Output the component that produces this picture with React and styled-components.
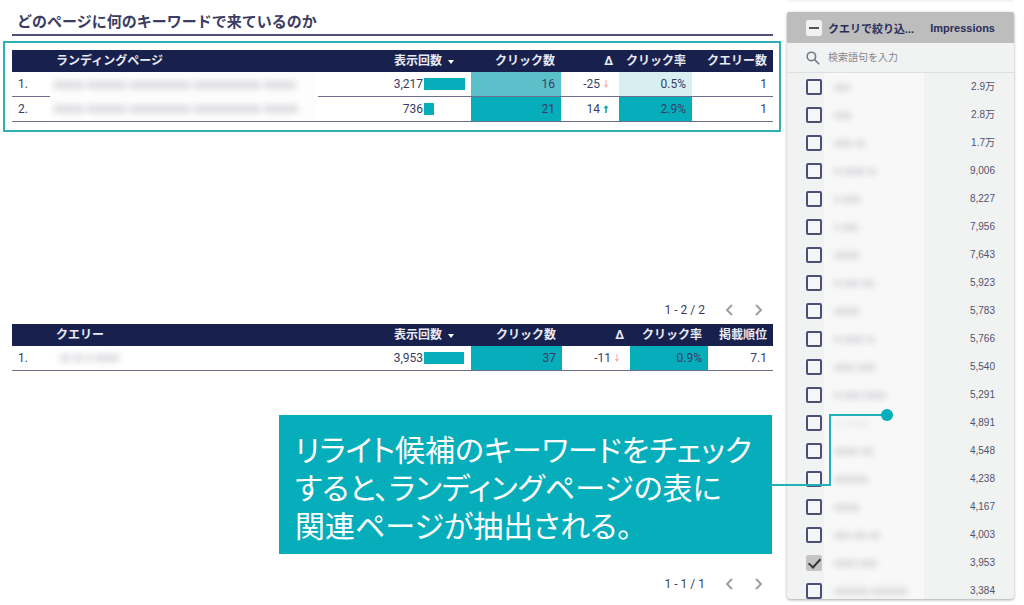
import React, { useState } from 'react';
import styled, { createGlobalStyle } from 'styled-components';

const GlobalStyle = createGlobalStyle`
  * {
    box-sizing: border-box;
  }

  body {
    margin: 0;
    background: #ffffff;
    color: #3a3c64;
    font-family: Roboto, 'Noto Sans CJK JP', sans-serif;
    font-size: 12px;
  }
`;

const Page = styled.div`
  display: flex;
  height: 100vh;
  overflow: hidden;
`;

const Main = styled.main`
  flex: 1;
  min-width: 0;
  display: grid;
  grid-template-rows: 324px 1fr;
  padding: 0 6px 0 3px;
`;

const Section = styled.section`
  position: relative;
  display: flex;
  flex-direction: column;
  padding-bottom: ${(props) => (props.$last ? '9px' : '2px')};
`;

const Title = styled.h1`
  margin: 0 8px 5px 9px;
  padding: 10px 5px 0;
  border-bottom: 2px solid #4d5078;
  font-size: 15px;
  font-weight: 700;
  line-height: 24px;
  color: #3a3c64;
`;

const Highlight = styled.div`
  border: 2px solid #2fb0b6;
  padding: 7px 6px 8px 7px;
`;

const TableWrap = styled.div`
  margin: 0 8px 0 9px;
`;

const Table = styled.table`
  width: 100%;
  table-layout: fixed;
  border-collapse: separate;
  border-spacing: 0;
`;

const Th = styled.th`
  height: 22px;
  padding: 0 ${(props) => (props.$sorted ? '17px' : '6px')} 0 6px;
  background: #18214d;
  color: #e9eaf4;
  font-size: 12px;
  font-weight: 700;
  line-height: 20px;
  text-align: ${(props) => props.$align || 'right'};
  white-space: nowrap;
`;

const Td = styled.td`
  position: relative;
  height: 25px;
  padding: 0 6px;
  border-bottom: 1px solid #6c6e8e;
  background: ${(props) => props.$fill || 'transparent'};
  text-align: ${(props) => props.$align || 'right'};
  line-height: 20px;
  white-space: nowrap;
`;

const SortArrow = styled.span`
  display: inline-block;
  margin-left: 6px;
  vertical-align: middle;
  border: 3px solid transparent;
  border-top: 4px solid #ffffff;
  border-bottom: 0;
`;

const BarCell = styled.div`
  display: flex;
  align-items: center;
  justify-content: flex-end;
  gap: 1px;
  margin-right: -6px;
`;

const BarTrack = styled.div`
  width: 47px;
`;

const Bar = styled.div`
  height: 12px;
  background: #06adba;
`;

const Delta = styled.div`
  display: flex;
  align-items: center;
  justify-content: flex-end;
  gap: 3px;
  padding-right: 4px;
`;

const Mask = styled.span`
  position: absolute;
  top: 0;
  left: 0;
  bottom: ${(props) => (props.$overLine ? '-1px' : '0')};
  display: flex;
  align-items: center;
  width: ${(props) => (props.$wide ? '268px' : '80px')};
  padding-left: ${(props) => (props.$wide ? '4px' : '10px')};
  background: ${(props) => (props.$wide ? '#fdfdfd' : '#ffffff')};
`;

const Smudges = styled.span`
  display: flex;
  gap: 3px;
  filter: blur(3px);
  opacity: ${(props) => props.$strength || 1};
`;

const Smudge = styled.span`
  height: ${(props) => props.$tall || 9}px;
  background: #c9c9d0;
`;

const Pager = styled.nav`
  display: flex;
  align-items: center;
  justify-content: flex-end;
  margin-top: auto;
  padding-right: 7px;
`;

const PagerText = styled.span`
  margin-right: 9px;
  font-size: 12px;
  line-height: 24px;
`;

const PagerButton = styled.button`
  display: flex;
  align-items: center;
  justify-content: center;
  width: 30px;
  height: 24px;
  padding: 0;
  border: 0;
  background: none;
  color: #a0a0a0;
  cursor: pointer;
`;

const Callout = styled.aside`
  position: absolute;
  top: 91px;
  right: 9px;
  width: 493px;
  padding: 14px 16px 11px;
  background: #06adba;
  color: #ffffff;
  font-family: 'Noto Sans CJK JP', sans-serif;
  font-feature-settings: 'palt';
  font-size: 30px;
  line-height: 38px;
  white-space: nowrap;
`;

const Connector = styled.svg`
  position: absolute;
  z-index: 2;
  top: -6px;
  left: 100%;
`;

const Side = styled.div`
  display: flex;
  flex-direction: column;
  gap: 10px;
  width: 227px;
  margin-right: 10px;
  padding-bottom: 6px;
`;

const SideEdge = styled.div`
  flex: none;
  height: 2px;
  background: #f6f6f6;
`;

const Filter = styled.form`
  flex: 1;
  min-height: 0;
  overflow: hidden;
  border-radius: 2px 2px 4px 4px;
  background: #f1f2f2;
  box-shadow: 0 1px 3px rgba(0, 0, 0, 0.35);
  color: #50526f;
  font-family: 'Liberation Sans', 'Noto Sans CJK JP', sans-serif;
  font-size: 10px;
`;

const FilterHead = styled.div`
  display: flex;
  align-items: center;
  height: 31px;
  padding: 0 19px;
  background: #bdbdbd;
  color: #2b2d58;
  font-size: 11px;
  font-weight: 700;
`;

const FilterTitle = styled.label`
  flex: 1;
  margin-left: 6px;
`;

const SearchRow = styled.label`
  display: flex;
  align-items: center;
  gap: 8px;
  height: 30px;
  padding: 0 19px;
  border-bottom: 1px solid #dfdfe1;
  color: #85868f;
`;

const SearchInput = styled.input`
  flex: 1;
  min-width: 0;
  padding: 0;
  border: 0;
  outline: 0;
  background: none;
  color: inherit;
  font: inherit;

  &::placeholder {
    color: #85868f;
    opacity: 1;
  }
`;

const Option = styled.label`
  display: flex;
  align-items: center;
  height: 28px;
  padding-right: 19px;
`;

const OptionName = styled.span`
  display: flex;
  align-items: center;
  align-self: stretch;
  width: 100px;
  margin-left: 2px;
  padding-left: 10px;
  background: #f8f8f8;
`;

const OptionValue = styled.span`
  flex: 1;
  line-height: 12px;
  text-align: right;
`;

const Checkbox = styled.input`
  appearance: none;
  flex: none;
  display: grid;
  place-items: center;
  width: 16px;
  height: 16px;
  margin: 0 0 0 ${(props) => (props.$head ? '0' : '19px')};
  border: 2px solid ${(props) => (props.$head ? '#f1f1f1' : '#4b4f78')};
  border-radius: 2px;
  background: ${(props) => (props.$head ? '#f1f1f1' : '#f6f6f8')};

  &:checked {
    border-color: #c4c4c4;
    background: #c4c4c4;
  }

  &:checked::after {
    content: '';
    width: 5px;
    height: 10px;
    margin-top: -3px;
    border: solid #333333;
    border-width: 0 2px 2px 0;
    transform: rotate(42deg);
  }

  &:indeterminate::after {
    content: '';
    width: 10px;
    height: 2px;
    background: #555555;
  }
`;

const pages = [
  { impressions: '3,217', bar: 41, clicks: '16', clicksFill: '#5bc0ca', delta: '-25', rate: '0.5%', rateFill: '#d8eff1', last: '1', name: [30, 40, 60, 68, 32] },
  { impressions: '736', bar: 10, clicks: '21', clicksFill: '#06adba', delta: '14', up: true, rate: '2.9%', rateFill: '#06adba', last: '1', name: [30, 40, 60, 68, 34] },
];

const queries = [
  { impressions: '3,953', bar: 40, clicks: '37', clicksFill: '#06adba', delta: '-11', rate: '0.9%', rateFill: '#06adba', last: '7.1', name: [10, 10, 6, 24] },
];

const options = [
  { value: '2.9万', name: [16] },
  { value: '2.8万', name: [17] },
  { value: '1.7万', name: [18, 10] },
  { value: '9,006', name: [6, 22, 8] },
  { value: '8,227', name: [6, 18] },
  { value: '7,956', name: [5, 16] },
  { value: '7,643', name: [25] },
  { value: '5,923', name: [6, 16, 12] },
  { value: '5,783', name: [25] },
  { value: '5,766', name: [6, 20, 8] },
  { value: '5,540', name: [20, 18] },
  { value: '5,291', name: [6, 18, 22] },
  { value: '4,891', name: [10, 22], faint: true },
  { value: '4,548', name: [24, 12] },
  { value: '4,238', name: [34] },
  { value: '4,167', name: [25] },
  { value: '4,003', name: [16, 14, 10] },
  { value: '3,953', name: [22, 18] },
  { value: '3,384', name: [34, 36] },
];

const Blurred = ({ parts, tall, strength }) => (
  <Smudges $strength={strength} aria-hidden="true">
    {parts.map((width, i) => (
      <Smudge key={i} $tall={tall} style={{ width }} />
    ))}
  </Smudges>
);

const DeltaArrow = ({ up }) => (
  <svg width="6" height="8" viewBox="0 0 6 8">
    {up ? (
      <path d="M3 0L5.5 3.2H3.8V8H2.2V3.2H.5z" fill="#12a5a6" />
    ) : (
      <path d="M3 8L5.2 5H3.6V0H2.4V5H.8z" fill="#f6b3be" />
    )}
  </svg>
);

const ReportTable = ({ nameLabel, lastLabel, widths, rows, wideName }) => (
  <Table>
    <colgroup>
      {widths.map((width, i) => (
        <col key={i} style={{ width }} />
      ))}
    </colgroup>
    <thead>
      <tr>
        <Th />
        <Th $align="left">{nameLabel}</Th>
        <Th $sorted>
          表示回数
          <SortArrow />
        </Th>
        <Th>クリック数</Th>
        <Th>Δ</Th>
        <Th>クリック率</Th>
        <Th>{lastLabel}</Th>
      </tr>
    </thead>
    <tbody>
      {rows.map((row, i) => (
        <tr key={i}>
          <Td $align="left">{i + 1}.</Td>
          <Td>
            <Mask $wide={wideName} $overLine={i < rows.length - 1}>
              <Blurred parts={row.name} tall={8} strength={0.6} />
            </Mask>
          </Td>
          <Td>
            <BarCell>
              {row.impressions}
              <BarTrack>
                <Bar style={{ width: row.bar }} />
              </BarTrack>
            </BarCell>
          </Td>
          <Td $fill={row.clicksFill}>{row.clicks}</Td>
          <Td>
            <Delta>
              {row.delta}
              <DeltaArrow up={row.up} />
            </Delta>
          </Td>
          <Td $fill={row.rateFill}>{row.rate}</Td>
          <Td>{row.last}</Td>
        </tr>
      ))}
    </tbody>
  </Table>
);

const Pagination = ({ range }) => (
  <Pager>
    <PagerText>{range}</PagerText>
    <PagerButton type="button" aria-label="前へ">
      <svg width="8" height="12" viewBox="0 0 8 12" fill="none" stroke="currentColor" strokeWidth="2">
        <path d="M7 1L2 6l5 5" />
      </svg>
    </PagerButton>
    <PagerButton type="button" aria-label="次へ">
      <svg width="8" height="12" viewBox="0 0 8 12" fill="none" stroke="currentColor" strokeWidth="2">
        <path d="M1 1l5 5-5 5" />
      </svg>
    </PagerButton>
  </Pager>
);

const QueryFilter = () => {
  const [checked, setChecked] = useState([17]);

  const toggle = (index) => {
    setChecked(checked.includes(index) ? checked.filter((i) => i !== index) : [...checked, index]);
  };

  const setPartial = (el) => {
    if (el) el.indeterminate = true;
  };

  return (
    <Filter>
      <FilterHead>
        <Checkbox $head type="checkbox" id="all-queries" ref={setPartial} />
        <FilterTitle htmlFor="all-queries">クエリで絞り込...</FilterTitle>
        <span>Impressions</span>
      </FilterHead>
      <SearchRow>
        <svg width="14" height="14" viewBox="0 0 14 14" fill="none" stroke="#777884" strokeWidth="1.6">
          <circle cx="5.4" cy="5.4" r="4.2" />
          <path d="M8.6 8.6l4.6 4.6" />
        </svg>
        <SearchInput type="text" placeholder="検索語句を入力" aria-label="検索語句を入力" />
      </SearchRow>
      {options.map((option, i) => (
        <Option key={i}>
          <Checkbox type="checkbox" checked={checked.includes(i)} onChange={() => toggle(i)} />
          <OptionName>
            <Blurred parts={option.name} tall={7} strength={option.faint ? 0.2 : 0.6} />
          </OptionName>
          <OptionValue>{option.value}</OptionValue>
        </Option>
      ))}
    </Filter>
  );
};

const App = () => (
  <>
    <GlobalStyle />
    <Page>
      <Main>
        <Section>
          <Title>どのページに何のキーワードで来ているのか</Title>
          <Highlight>
            <ReportTable
              nameLabel="ランディングページ"
              lastLabel="クエリー数"
              widths={[38, 'auto', 90, 90, 58, 73, 81]}
              rows={pages}
              wideName
            />
          </Highlight>
          <Pagination range="1 - 2 / 2" />
        </Section>
        <Section $last>
          <TableWrap>
            <ReportTable
              nameLabel="クエリー"
              lastLabel="掲載順位"
              widths={[38, 'auto', 90, 91, 68, 78, 65]}
              rows={queries}
            />
          </TableWrap>
          <Pagination range="1 - 1 / 1" />
          <Callout>
            リライト候補のキーワードをチェック
            <br />
            すると、ランディングページの表に
            <br />
            関連ページが抽出される。
            <Connector width="122" height="80" viewBox="0 0 122 80" fill="none">
              <path d="M0 76H58V6H115" stroke="#1fb0b9" strokeWidth="2" />
              <circle cx="115" cy="6" r="6" fill="#06adba" />
            </Connector>
          </Callout>
        </Section>
      </Main>
      <Side>
        <SideEdge />
        <QueryFilter />
      </Side>
    </Page>
  </>
);

export default App;
